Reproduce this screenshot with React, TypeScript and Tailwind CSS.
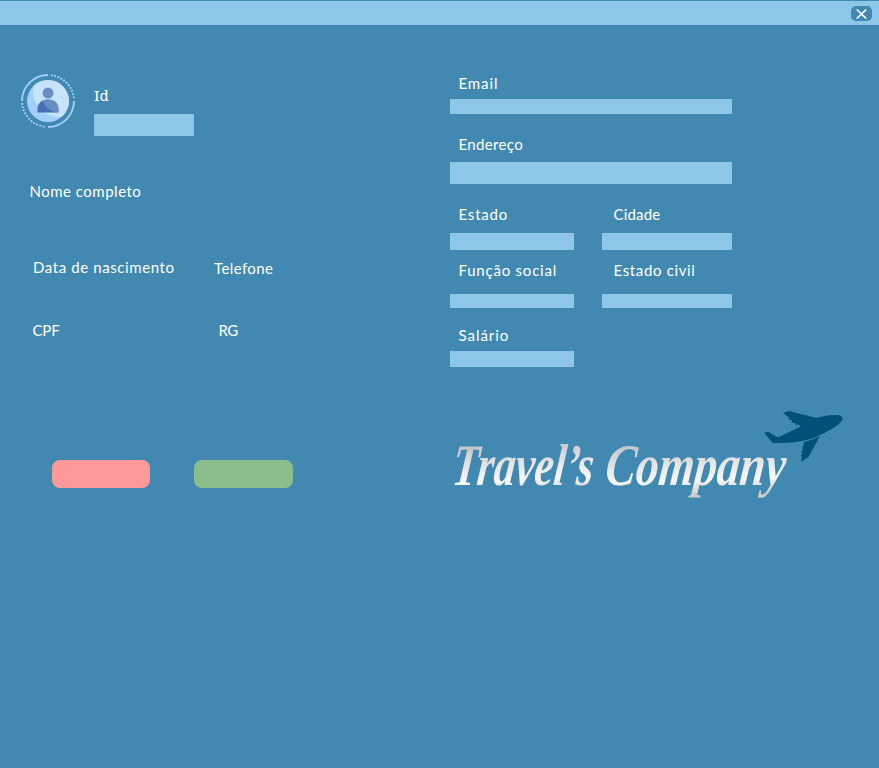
import React from "react";

function Label({ children, className = "" }: { children: React.ReactNode; className?: string }) {
  return (
    <span
      className={`block h-5 whitespace-nowrap font-['Lato','Noto_Sans',sans-serif] text-[15px] leading-5 text-white ${className}`}
    >
      {children}
    </span>
  );
}

function Field({ name, className }: { name: string; className: string }) {
  return <input aria-label={name} className={`block bg-[#8dc6e7] outline-none ${className}`} />;
}

function Avatar() {
  return (
    <svg className="h-[54px] w-[54px] shrink-0" viewBox="0 0 54 54" fill="none">
      <defs>
        <clipPath id="disc">
          <circle cx="27" cy="27" r="21" />
        </clipPath>
        <clipPath id="person">
          <circle cx="27" cy="19" r="5.3" />
          <path d="M16.500 38.500V35.500C16.500 28.800 21 25.500 27 25.500S37.500 28.800 37.500 35.500V38.500Z" />
        </clipPath>
      </defs>
      <path d="M1 27A26 26 0 0 1 27 1M53 27A26 26 0 0 1 27 53" stroke="#a0cff9" strokeWidth="1.900" />
      <path
        d="M30 1.200A26 26 0 0 1 53 25M1.100 29A26 26 0 0 0 25 52.900"
        stroke="#a0cff9"
        strokeWidth="1.900"
        strokeDasharray="1.900 1.400"
      />
      <circle cx="27" cy="27" r="21" fill="#a4cffa" />
      <circle cx="38" cy="17" r="26" fill="#c7e3fc" clipPath="url(#disc)" />
      <g clipPath="url(#person)">
        <path d="M14 12H40V40H14Z" fill="#4371b3" />
        <circle cx="42" cy="17" r="23" fill="#688fc3" />
      </g>
    </svg>
  );
}

function Brand() {
  return (
    <svg className="block h-[100px] w-[400px]" viewBox="450 405 400 100" role="img">
      <defs>
        <linearGradient id="silver" x1="0" y1="0" x2="0.120" y2="1">
          <stop offset="0.200" stopColor="#bfc1c4" />
          <stop offset="0.500" stopColor="#e3e3e4" />
          <stop offset="0.780" stopColor="#f7f7f7" />
          <stop offset="1" stopColor="#cccccc" />
        </linearGradient>
      </defs>
      <g
        className="font-['Liberation_Serif',serif] text-[59px] font-bold italic"
        fill="url(#silver)"
      >
        <text transform="translate(451 485) skewX(-6)" textLength="141" lengthAdjust="spacingAndGlyphs">
          Travel’s
        </text>
        <text transform="translate(604 485) skewX(-6)" textLength="180" lengthAdjust="spacingAndGlyphs">
          Company
        </text>
      </g>
      <g fill="#005078">
        <path d="M764 432.500L768.500 432L778 437.500L800.500 426.500L798.500 424.500L796 425.500L795 423L791.500 422.500L792 420L788.500 420L789.500 418L783 413L789 411L816.500 418C824 415.500 832 414.500 838 415C842 415.500 843.500 417.500 842.300 420C839 425 832 429.500 821 434.500C813 438.500 807 440.500 799 441.500C791 442.500 783 443 772.500 443Z" />
        <path d="M804 442C810 440.500 815 438.500 820 436L808.500 457L801 461.800L802 456.500L800.800 456L802.500 453L801 452L803 449.500L802 448L803.500 446Z" />
      </g>
    </svg>
  );
}

export default function App() {
  return (
    <div className="flex h-[768px] w-[879px] flex-col overflow-hidden bg-[#4189b1]">
      <header className="mt-px flex h-6 shrink-0 items-start justify-end bg-[#8dc6e7] pr-[7px] pt-[5px]">
        <button aria-label="Fechar" className="flex h-[15px] w-[21px] items-center justify-center rounded-[5px] bg-[#4189b1]">
          <svg width="11" height="10" viewBox="0 0 11 10" stroke="white" strokeWidth="1.500">
            <path d="M.7.400L10.300 9.600M10.300.400L.7 9.600" />
          </svg>
        </button>
      </header>

      <main className="flex">
        <section className="w-[450px] shrink-0">
          <div className="flex pl-[21px] pt-[49px]">
            <Avatar />
            <div className="ml-[19px] pt-[11px]">
              <span className="block h-5 font-['Noto_Serif','DejaVu_Serif',serif] text-[15px] leading-5 text-white">Id</span>
              <Field name="Id" className="mt-[9px] h-[22px] w-[100px]" />
            </div>
          </div>
          <Label className="ml-[29.500px] mt-[45px] tracking-[0.500px]">Nome completo</Label>
          <div className="mt-14 flex">
            <Label className="ml-[33px] w-[181px] tracking-[0.600px]">Data de nascimento</Label>
            <Label className="mt-px tracking-[0.400px]">Telefone</Label>
          </div>
          <div className="mt-[42px] flex">
            <Label className="ml-[32.500px] w-[186px] tracking-[-0.200px]">CPF</Label>
            <Label className="tracking-[-0.500px]">RG</Label>
          </div>
          <div className="ml-[52px] mt-[120px] flex gap-11">
            <button aria-label="Cancelar" className="h-7 w-[98px] rounded-lg bg-[#ff9999]" />
            <button aria-label="Salvar" className="h-7 w-[99px] rounded-lg bg-[#8bbd8b]" />
          </div>
        </section>

        <section className="w-[400px] pt-12">
          <Label className="pl-[8.500px] tracking-[0.900px]">Email</Label>
          <Field name="Email" className="mt-1.5 h-[15px] w-[282px]" />
          <Label className="mt-5 pl-[8.500px] tracking-[0.350px]">Endereço</Label>
          <Field name="Endereço" className="mt-2 h-[22px] w-[282px]" />
          <div className="mt-5 flex gap-7">
            <div className="w-[124px]">
              <Label className="pl-[8.500px] tracking-[0.800px]">Estado</Label>
              <Field name="Estado" className="mt-[9px] h-[17px] w-full" />
              <Label className="mt-2.5 pl-[8.500px] tracking-[0.780px]">Função social</Label>
              <Field name="Função social" className="mt-3.5 h-[14px] w-full" />
              <Label className="mt-[17px] pl-[8.500px] tracking-[0.950px]">Salário</Label>
              <Field name="Salário" className="mt-1.5 h-4 w-full" />
            </div>
            <div className="w-[130px]">
              <Label className="pl-[11.500px] tracking-[0.200px]">Cidade</Label>
              <Field name="Cidade" className="mt-[9px] h-[17px] w-full" />
              <Label className="mt-2.5 pl-[11.500px] tracking-[0.650px]">Estado civil</Label>
              <Field name="Estado civil" className="mt-3.5 h-[14px] w-full" />
            </div>
          </div>
          <div className="mt-[38px]">
            <Brand />
          </div>
        </section>
      </main>
    </div>
  );
}
